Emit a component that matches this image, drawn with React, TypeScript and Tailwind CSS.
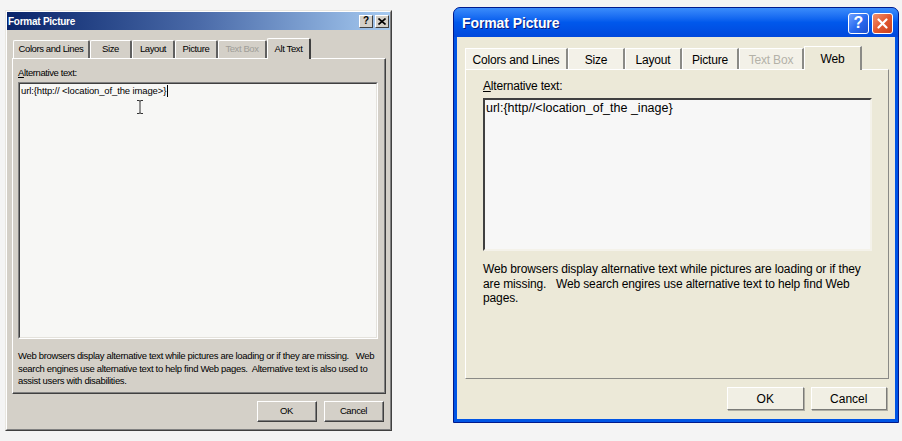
import React from "react";

const classicFont = { fontFamily: '"Liberation Sans", Arial, sans-serif' };

function ClassicTab({ label, w, active, disabled }: { label: string; w: string; active?: boolean; disabled?: boolean }) {
  if (active) {
    return (
      <div
        className={`${w} relative z-10 -mb-px flex h-[21px] items-center justify-center rounded-t-[2px] border-t border-l border-r-2 border-t-white border-l-white border-r-[#404040] bg-[#d4d0c8] text-[9.5px] tracking-[-0.4px] text-black`}
      >
        {label}
      </div>
    );
  }
  return (
    <div
      className={`${w} flex h-[18px] items-center justify-center rounded-t-[2px] border-t border-l border-r-2 border-t-white border-l-white border-r-[#606060] bg-[#d4d0c8] text-[9.5px] tracking-[-0.4px] ${disabled ? "text-[#a09e98]" : "text-black"}`}
    >
      {label}
    </div>
  );
}

function ClassicButton({ label }: { label: string }) {
  return (
    <div className="w-[60px] h-[21px] border border-t-white border-l-white border-r-[#404040] border-b-[#404040] bg-[#d4d0c8]">
      <div className="flex h-full w-full items-center justify-center border-r border-b border-r-[#808080] border-b-[#808080] text-[9.5px] tracking-[-0.4px] text-black">
        {label}
      </div>
    </div>
  );
}

function LeftDialog() {
  return (
    <div
      className="ml-[5px] mt-[10px] h-[421px] w-[387px] border border-t-[#e8e6e0] border-l-[#e8e6e0] border-r-[#404040] border-b-[#404040] bg-[#d4d0c8]"
      style={classicFont}
    >
      <div className="flex h-full w-full flex-col border border-t-white border-l-white border-r-[#808080] border-b-[#808080]">
        {/* title bar */}
        <div className="flex h-[18px] items-center justify-between bg-linear-to-r from-[#0a246a] via-[#4a6aa8] to-[#a6caf0] pl-[1px] pr-[1px]">
          <span className="text-[10px] font-bold tracking-[-0.25px] text-white">Format Picture</span>
          <div className="flex gap-[2px]">
            <div className="flex h-[13px] w-[14px] items-center justify-center border border-t-white border-l-white border-r-[#404040] border-b-[#404040] bg-[#d4d0c8] text-[10px] font-bold leading-none text-black">
              ?
            </div>
            <div className="flex h-[13px] w-[14px] items-center justify-center border border-t-white border-l-white border-r-[#404040] border-b-[#404040] bg-[#d4d0c8]">
              <svg width="8" height="7" viewBox="0 0 8 7">
                <path d="M0.5 0.5 L7.5 6.5 M7.5 0.5 L0.5 6.5" stroke="black" strokeWidth="1.6" />
              </svg>
            </div>
          </div>
        </div>
        {/* body */}
        <div className="flex flex-1 flex-col px-[5px] pt-[7px]">
          <div className="flex h-[21px] items-end pl-[1px]">
            <ClassicTab label="Colors and Lines" w="w-[77px]" />
            <ClassicTab label="Size" w="w-[42px]" />
            <ClassicTab label="Layout" w="w-[43px]" />
            <ClassicTab label="Picture" w="w-[43px]" />
            <ClassicTab label="Text Box" w="w-[49px]" disabled />
            <ClassicTab label="Alt Text" w="w-[44px]" active />
          </div>
          <div className="h-[336px] w-[374px] border-t border-l border-r border-b border-t-white border-l-white border-r-[#404040] border-b-[#404040]">
            <div className="flex h-full w-full flex-col border-r border-b border-r-[#808080] border-b-[#808080] pl-[5px] pr-[6px] pt-[8px]">
              <div className="text-[9.5px] leading-[11px] tracking-[-0.4px] text-black">
                <span className="underline">A</span>lternative text:
              </div>
              <div className="relative mt-[4px] h-[257px] w-[360px] border border-t-[#808080] border-l-[#808080] border-r-white border-b-white bg-[#f7f7f5]">
                <div className="h-full w-full border border-t-[#404040] border-l-[#404040] border-r-[#e4e2dc] border-b-[#e4e2dc] pl-[1px] pt-[1px]">
                  <div className="flex items-center text-[9.5px] leading-[12px] tracking-[-0.13px] text-black">
                    <span>url:{"{"}http:// &lt;location_of_the image&gt;{"}"}</span>
                    <span className="ml-[1px] inline-block h-[12px] w-px bg-black" />
                  </div>
                </div>
                <svg className="absolute left-[117px] top-[17px]" width="8" height="14" viewBox="0 0 8 14">
                  <path d="M1 0.5 H3 Q4 0.5 4 1.5 Q4 0.5 5 0.5 H7 M4 1.5 V12.5 M1 13.5 H3 Q4 13.5 4 12.5 Q4 13.5 5 13.5 H7" stroke="#333" strokeWidth="1" fill="none" />
                </svg>
              </div>
              <div className="mt-[11px] text-[9.5px] leading-[12.5px] tracking-[-0.33px] text-black">
                Web browsers display alternative text while pictures are loading or if they are missing.&nbsp;&nbsp; Web search engines use alternative text to help find Web pages.&nbsp; Alternative text is also used to assist users with disabilities.
              </div>
            </div>
          </div>
          <div className="mt-[7px] flex justify-end gap-[7px] pr-[1px]">
            <ClassicButton label="OK" />
            <ClassicButton label="Cancel" />
          </div>
        </div>
      </div>
    </div>
  );
}

function XpTab({ label, w, active, disabled }: { label: string; w: string; active?: boolean; disabled?: boolean }) {
  if (active) {
    return (
      <div
        className={`${w} relative z-10 -mb-px flex h-[24px] items-center justify-center border-t border-l border-r-2 border-t-white border-l-white border-r-[#8a8a86] bg-[#ece9d8] text-[12px] tracking-[-0.2px] text-black`}
      >
        {label}
      </div>
    );
  }
  return (
    <div
      className={`${w} flex h-[21px] items-center justify-center border-t border-l border-r-2 border-t-white border-l-white border-r-[#8a8a86] bg-[#f3f1e8] pt-[2px] text-[12px] tracking-[-0.2px] ${disabled ? "text-[#b4b2a8]" : "text-black"}`}
    >
      {label}
    </div>
  );
}

function XpButton({ label }: { label: string }) {
  return (
    <div className="flex h-[23px] w-[77px] items-center justify-center border border-t-white border-l-white border-r-[#7b7b78] border-b-[#7b7b78] bg-[#f1efe4] text-[12px] text-black shadow-[1px_1px_0_#b0aea4]">
      {label}
    </div>
  );
}

function RightDialog() {
  return (
    <div
      className="ml-[61px] mt-[7px] flex h-[416px] w-[446px] flex-col overflow-hidden rounded-t-[7px] border border-[#001a8c] bg-[#0055e5]"
      style={classicFont}
    >
      {/* title bar */}
      <div className="flex h-[29px] items-center justify-between bg-linear-to-b from-[#3b8cfb] via-[#0058ec] to-[#0048dc] pl-[8px] pr-[5px] pt-[1px]">
        <span className="text-[14px] font-bold tracking-[-0.1px] text-white [text-shadow:1px_1px_0_#0a1a7a]">
          Format Picture
        </span>
        <div className="flex gap-[3px]">
          <div className="flex h-[21px] w-[21px] items-center justify-center rounded-[3px] border border-white bg-linear-to-br from-[#6fa0ff] via-[#2a6cf0] to-[#1d4fd0] text-[16px] font-bold leading-none text-white">
            ?
          </div>
          <div className="flex h-[21px] w-[21px] items-center justify-center rounded-[3px] border border-white bg-linear-to-br from-[#f0906e] via-[#e2582f] to-[#c8401c]">
            <svg width="11" height="11" viewBox="0 0 11 11">
              <path d="M1.5 1.5 L9.5 9.5 M9.5 1.5 L1.5 9.5" stroke="white" strokeWidth="2.2" strokeLinecap="round" />
            </svg>
          </div>
        </div>
      </div>
      {/* body */}
      <div className="mx-[3px] mb-[3px] flex flex-1 flex-col bg-[#ece9d8] px-[8px] pt-[8px]">
        <div className="flex h-[24px] items-end">
          <XpTab label="Colors and Lines" w="w-[103px]" />
          <XpTab label="Size" w="w-[57px]" />
          <XpTab label="Layout" w="w-[57px]" />
          <XpTab label="Picture" w="w-[57px]" />
          <XpTab label="Text Box" w="w-[65px]" disabled />
          <XpTab label="Web" w="w-[58px]" active />
        </div>
        <div className="flex h-[310px] w-[424px] flex-col border border-t-white border-l-white border-r-[#8a8a86] border-b-[#8a8a86] pl-[17px] pr-[15px] pt-[9px]">
          <div className="text-[12px] leading-[14px] tracking-[-0.2px] text-black">
            <span className="underline">A</span>lternative text:
          </div>
          <div className="mt-[5px] h-[153px] w-[389px] border-2 border-t-[#404040] border-l-[#404040] border-r-[#f4f2ea] border-b-[#f4f2ea] bg-[#f7f7f7] pl-[1px] pt-[1px]">
            <div className="text-[12.5px] leading-[14px] tracking-[0px] text-black">
              url:{"{"}http//&lt;location_of_the _inage{"}"}
            </div>
          </div>
          <div className="mt-[11px] text-[12px] leading-[14.5px] tracking-[-0.12px] text-black">
            Web browsers display alternative text while pictures are loading or if they are missing.&nbsp;&nbsp; Web search engires use alternative text to help find Web pages.
          </div>
        </div>
        <div className="ml-[262px] mt-[8px] flex gap-[7px]">
          <XpButton label="OK" />
          <XpButton label="Cancel" />
        </div>
      </div>
    </div>
  );
}

export default function App() {
  return (
    <div className="flex h-[441px] w-[902px] items-start bg-[#f4f4f4]">
      <LeftDialog />
      <RightDialog />
    </div>
  );
}
